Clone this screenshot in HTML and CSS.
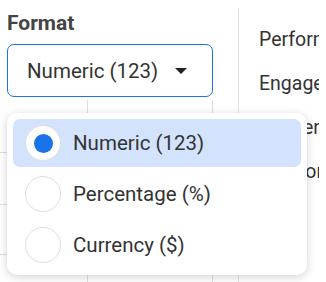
FILE: index.html
```html
<!DOCTYPE html>
<html lang="en">
<head>
    <meta charset="UTF-8">
    <title>Format</title>
    <link rel="stylesheet" href="styles.css">
</head>
<body>
    <div class="page">
        <div class="left">
            <div class="field-label">Format</div>
            <div class="select">
                <span>Numeric (123)</span>
                <span class="caret"></span>
            </div>
            <!-- tabela por trás do menu -->
            <div class="grid">
                <div class="grid-row r1"><div class="cell c1"></div><div class="cell c2"></div><div class="cell c3"></div></div>
                <div class="grid-row r2"><div class="cell c1"></div><div class="cell c2"></div><div class="cell c3"></div></div>
                <div class="grid-row r3"><div class="cell c1"></div><div class="cell c2"></div><div class="cell c3"></div></div>
                <div class="grid-row last">
                    <div class="cell c1"><div class="pill"></div></div>
                    <div class="cell c2"></div>
                    <div class="cell c3"></div>
                </div>
            </div>
        </div>
        <div class="right">
            <div class="side-item">Performance</div>
            <div class="side-item">Engagement</div>
            <div class="side-item">Conversions</div>
            <div class="side-item">Creators</div>
        </div>
    </div>

    <!-- Menu de opções -->
    <div class="menu">
        <div class="option selected">
            <span class="radio"><span class="dot"></span></span>
            <span>Numeric (123)</span>
        </div>
        <div class="option">
            <span class="radio"></span>
            <span>Percentage (%)</span>
        </div>
        <div class="option">
            <span class="radio"></span>
            <span>Currency ($)</span>
        </div>
    </div>
</body>
</html>
```

FILE: styles.css
```css
body {
    margin: 0;
    font-family: Roboto, "Liberation Sans", sans-serif;
    color: #333;
    background: #fff;
    overflow: hidden;
}

.page {
    display: flex;
    height: 282px;
    overflow: hidden;
}

.left {
    width: 238px;
    flex-shrink: 0;
    padding-top: 12px;
    box-sizing: border-box;
}

.field-label {
    font-size: 21px;
    font-weight: bold;
    color: #444;
    margin-left: 7px;
    line-height: 22px;
}

.select {
    display: flex;
    align-items: center;
    width: 206px;
    height: 53px;
    margin: 10px 0 0 7px;
    padding-left: 19px;
    box-sizing: border-box;
    border: 1.5px solid #1a73e8;
    border-radius: 7px;
    font-size: 20.5px;
    color: #333;
}

.caret {
    width: 0;
    height: 0;
    margin-left: 17px;
    border-left: 6px solid transparent;
    border-right: 6px solid transparent;
    border-top: 6px solid #222;
}

.grid {
    margin-top: 3px;
}

.grid-row {
    display: flex;
    box-sizing: border-box;
    border-bottom: 1px solid #ddd;
}

.r1 {
    height: 53px;
}

.r2 {
    height: 52px;
}

.r3 {
    height: 50px;
}

.grid-row.last {
    height: 40px;
    border-bottom: none;
}

.cell {
    height: 100%;
    box-sizing: border-box;
}

.c1 {
    width: 88px;
    border-right: 1px solid #ddd;
    position: relative;
}

.c2 {
    width: 125px;
    border-right: 1px solid #ddd;
}

.c3 {
    width: 25px;
}

.pill {
    position: absolute;
    left: 26px;
    top: 23px;
    width: 128px;
    height: 30px;
    border: 2px solid #222;
    border-top-color: transparent;
    border-radius: 14px;
}

.right {
    flex: 1;
    border-left: 1px solid #e3e3e3;
    margin: 8px 7px 0 0;
    padding: 10px 0 0 20px;
    white-space: nowrap;
    overflow: hidden;
}

.side-item {
    font-size: 19.5px;
    line-height: 44px;
    color: #333;
}

.menu {
    position: absolute;
    left: 7px;
    top: 113px;
    width: 300px;
    padding: 6px;
    box-sizing: border-box;
    background: #fff;
    border-radius: 10px;
    box-shadow: 0 2px 10px rgba(0, 0, 0, 0.18);
    display: flex;
    flex-direction: column;
    gap: 3px;
}

.option {
    display: flex;
    align-items: center;
    height: 48px;
    padding-left: 12px;
    border-radius: 7px;
    font-size: 20.5px;
    color: #333;
}

.option.selected {
    background: #d3e3fd;
}

.radio {
    width: 36px;
    height: 36px;
    box-sizing: border-box;
    margin-right: 12px;
    border: 1.5px solid #ddd;
    border-radius: 50%;
    background: #fff;
    display: flex;
    align-items: center;
    justify-content: center;
}

.dot {
    width: 19px;
    height: 19px;
    border-radius: 50%;
    background: #1a73e8;
}
```
